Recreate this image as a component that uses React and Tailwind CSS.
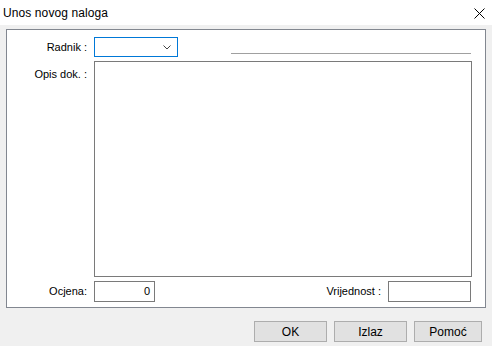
export default function App() {
  const f = { fontFamily: '"Liberation Sans", Arial, sans-serif' };
  return (
    <div className="w-[492px] h-[346px] bg-[#f0f0f0] overflow-hidden flex flex-col text-black" style={f}>
      <div className="h-[25px] bg-white flex items-center justify-between pl-[3px] pr-[7px] shrink-0">
        <span className="text-[12px] tracking-[0.1px]">Unos novog naloga</span>
        <svg width="11" height="11" viewBox="0 0 11 11" className="mt-[1px]">
          <path d="M0.5 0.5 L10.5 10.5 M10.5 0.5 L0.5 10.5" stroke="#000" strokeWidth="1" />
        </svg>
      </div>
      <div className="mt-[4px] ml-[6px] w-[480px] h-[279px] border border-[#828790] bg-white flex flex-col pr-[13px] shrink-0">
        <div className="flex mt-[7px] h-[20px] items-center">
          <div className="w-[80px] text-right text-[11px]">Radnik :</div>
          <div className="ml-[7px] w-[84px] h-[20px] border border-[#0078d7] flex items-center justify-end pr-[6px]">
            <svg width="8" height="5" viewBox="0 0 8 5">
              <path d="M0.5 0.5 L4 4 L7.5 0.5" stroke="#444" strokeWidth="1" fill="none" />
            </svg>
          </div>
          <div className="ml-[53px] flex-1 self-end mb-[3px] h-px bg-[#a0a0a0] mr-[1px]" />
        </div>
        <div className="flex mt-[4px]">
          <div className="w-[80px] text-right text-[11px] pt-[5px]">Opis dok. :</div>
          <div className="ml-[7px] flex-1 h-[216px] border border-[#7a7a7a]" />
        </div>
        <div className="flex mt-[4px] items-center h-[21px]">
          <div className="w-[80px] text-right text-[11px]">Ocjena:</div>
          <div className="ml-[7px] w-[61px] h-[21px] border border-[#7a7a7a] flex items-center justify-end pr-[4px] text-[11px]">0</div>
          <div className="flex-1 text-right text-[11px] pr-[7px]">Vrijednost :</div>
          <div className="w-[83px] h-[21px] border border-[#7a7a7a] mr-[1px]" />
        </div>
      </div>
      <div className="flex justify-end pr-[10px] mt-[13px] gap-[7px] text-[12px]">
        <div className="w-[73px] h-[21px] bg-[#e1e1e1] border border-[#adadad] flex items-center justify-center">OK</div>
        <div className="w-[73px] h-[21px] bg-[#e1e1e1] border border-[#adadad] flex items-center justify-center">Izlaz</div>
        <div className="w-[68px] h-[21px] bg-[#e1e1e1] border border-[#adadad] flex items-center justify-center">Pomoć</div>
      </div>
    </div>
  );
}
